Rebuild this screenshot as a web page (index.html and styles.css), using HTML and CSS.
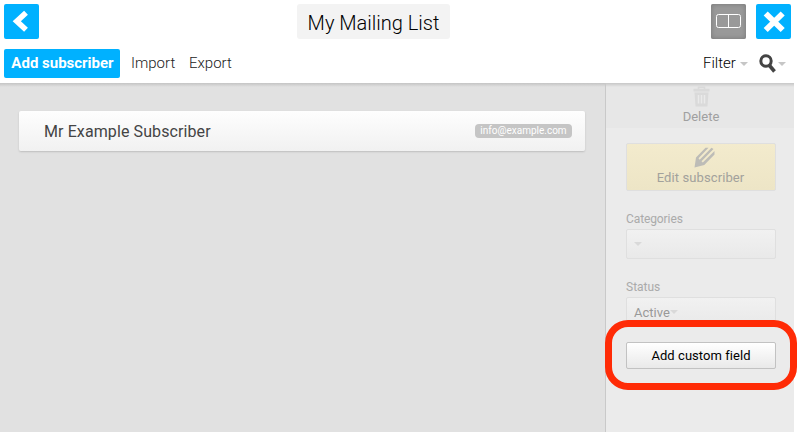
FILE: index.html
```html
<!DOCTYPE html>
<html lang="en">
<head>
<meta charset="utf-8">
<title>My Mailing List</title>
<link rel="stylesheet" href="styles.css">
</head>
<body>
<div class="app">
  <header class="header">
    <div class="titlebar">
      <button class="square"><svg width="35" height="35" viewBox="0 0 35 35"><path d="M22 8.800 12.800 17.300 22 25.800" fill="none" stroke="#fff" stroke-width="5.600"/></svg></button>
      <h1 class="title"><span class="title-text">My Mailing List</span></h1>
      <div class="window-actions">
        <button class="square layout"><svg width="35" height="35" viewBox="0 0 35 35"><rect x="5.5" y="10.5" width="24" height="13" rx="2" fill="none" stroke="#fff"/><path d="M17.5 10.5v13" stroke="#fff"/></svg></button>
        <button class="square"><svg width="35" height="35" viewBox="0 0 35 35"><path d="M9.700 9.500 26.700 26M26.700 9.500 9.700 26" stroke="#fff" stroke-width="5.800"/></svg></button>
      </div>
    </div>
    <nav class="toolbar">
      <button class="add"><span class="add-text">Add subscriber</span></button>
      <span class="link import">Import</span>
      <span class="link export">Export</span>
      <span class="link filter">Filter</span>
      <i class="caret caret-filter"></i>
      <svg class="search" width="18" height="20" viewBox="0 0 18 20"><circle cx="7" cy="7" r="5.200" fill="none" stroke="#444" stroke-width="3"/><path d="m10.500 11.500 5 6" stroke="#444" stroke-width="3.600"/></svg>
      <i class="caret caret-search"></i>
    </nav>
  </header>
  <div class="content">
    <main class="list">
      <article class="card">
        <span class="name">Mr Example Subscriber</span>
        <span class="email"><span class="email-text">info@example.com</span></span>
      </article>
    </main>
    <aside class="sidebar">
      <div class="delete">
        <svg width="17" height="21" viewBox="0 0 17 21"><path d="M5.500 3V1.200h6V3" fill="none" stroke="#dadada" stroke-width="1.600"/><path d="M.5 2.700h16v2.800H.5zM1.500 6.500h14l-1 14h-12z" fill="#dadada"/><path d="M5.500 9v8.500M8.500 9v8.500M11.500 9v8.500" stroke="#eaeaea" stroke-width="1.500"/></svg>
        <span class="delete-text">Delete</span>
      </div>
      <div class="fields">
        <button class="box edit">
          <svg width="21" height="21" viewBox="0 0 21 21"><path d="M.5 20.500 2 10.500 11.500.8h3L4.500 11.200l1.200 1.500L17.500.8l2 1.200L7.500 14.300l1.300 1.300L20.500 4v3.500L10.300 18z" fill="#bdbcb7"/></svg>
          <span class="edit-text">Edit subscriber</span>
        </button>
        <label class="label categories"><span class="categories-text">Categories</span></label>
        <div class="box select"><i class="caret faint"></i></div>
        <label class="label status"><span class="status-text">Status</span></label>
        <div class="box select"><span class="active-text">Active</span><i class="caret faint"></i></div>
        <button class="box custom"><span class="custom-text">Add custom field</span></button>
      </div>
    </aside>
  </div>
</div>
<div class="highlight"></div>
</body>
</html>
```
FILE: styles.css
```css
* { box-sizing: border-box; }
body { margin: 0; width: 797px; height: 432px; overflow: hidden; position: relative; background: #fff; font-family: Roboto, "Liberation Sans", sans-serif; }
button { border: 0; padding: 0; margin: 0; font: inherit; }
svg { display: block; flex: none; }
span { white-space: nowrap; }
.app { height: 432px; display: flex; flex-direction: column; }
.header { height: 83px; flex: none; background: #fff; }
.titlebar { display: flex; padding: 4px 6px 0 4px; height: 39px; }
.square { width: 35px; height: 35px; background: #00b1ff; border-radius: 2px; }
.title { margin: 0 auto 0 258px; width: 153px; height: 35px; line-height: 38px; background: #f3f3f3; border-radius: 3px; text-align: center; font-size: 20px; font-weight: 300; color: #000; }
.window-actions { display: flex; gap: 10px; }
.layout { background: #999; box-shadow: inset 0 0 5px #777; }
.toolbar { display: flex; align-items: center; height: 29px; margin-top: 10px; padding-left: 4px; }
.add { width: 116px; height: 29px; background: #00b1ff; border-radius: 2px; color: #fff; font-size: 15px; line-height: 27px; font-weight: 700; padding-left: 1px; }
.link { font-size: 15px; line-height: 26px; height: 28px; font-weight: 300; color: #222; }
.import { margin-left: 11px; width: 58px; }
.export { width: 514px; }
.filter { width: 37px; color: #000; }
.caret { flex: none; width: 0; height: 0; border: 4px solid transparent; border-top-color: #c6c6c6; border-bottom: 0; }
.search { margin-left: 11px; }
.caret-search { margin-left: 1px; }
.content { flex: 1; width: 794px; display: flex; background: linear-gradient(#c4c4c4, #e1e1e1 4px); }
.list { width: 605px; padding: 28px 0 0 19px; }
.card { width: 566px; height: 40px; display: flex; align-items: center; justify-content: space-between; padding: 0 13px 0 25px; border-radius: 2px; background: linear-gradient(#fefefe, #f1f1f1); box-shadow: 0 1px 2px #bdbdbd; }
.name { font-size: 16px; letter-spacing: .1px; color: #444; }
.email { width: 97px; height: 14px; border-radius: 4px; background: #c5c5c5; color: #fff; font-size: 10px; line-height: 14px; text-align: center; }
.sidebar { width: 189px; border-left: 1px solid #c9c9c9; background: linear-gradient(#cbcbcb, #ebebeb 4px); }
.delete { height: 45px; padding-top: 3px; display: flex; flex-direction: column; align-items: center; padding-left: 2px; background: rgba(0,0,0,.015); color: #a0a0a0; font-size: 13px; line-height: 19px; }
.fields { padding: 15px 18px 0 20px; display: flex; flex-direction: column; }
.box { width: 150px; border: 1px solid #dfdfdf; border-radius: 2px; }
.edit { height: 48px; display: flex; flex-direction: column; align-items: center; padding: 3px 0 0 6px; background: linear-gradient(#f3ebcd, #ede5c6); color: #a2a19c; font-size: 13px; line-height: 20px; }
.edit-text { margin-left: -7px; letter-spacing: .1px; }
.label { font-size: 12px; line-height: 16px; height: 16px; color: #aaa; }
.categories { margin: 20px 0 2px; }
.status { margin: 20px 0 2px; }
.categories-text { letter-spacing: -.1px; }
.select { height: 30px; display: flex; align-items: center; padding-left: 7px; background: linear-gradient(#f1f1f1, #e9e9e9); color: #999; font-size: 13px; }
.faint { border-top-color: #d9d9d9; }
.custom { height: 27px; margin-top: 15px; background: linear-gradient(#fff, #e9e9e9); border-color: #c2c2c2; color: #000; font-size: 13px; line-height: 25px; }
.custom-text { letter-spacing: .05px; }
.highlight { position: absolute; left: 605px; top: 320px; width: 192px; height: 70px; border: 7px solid #ff2b06; border-radius: 23px; pointer-events: none; }
```
